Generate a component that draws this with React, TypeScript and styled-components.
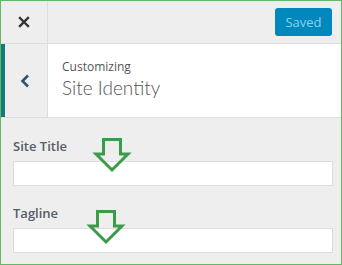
import React from "react";
import styled, { createGlobalStyle } from "styled-components";

const Global = createGlobalStyle`
  html, body { margin: 0; padding: 0; background: #fff; }
  * { box-sizing: border-box; }
`;

const Frame = styled.div`
  position: relative;
  width: 342px;
  height: 265px;
  border: 1px solid #62b866;
  background: #eee;
  font-family: "Open Sans", "Noto Sans", sans-serif;
  color: #555;
  overflow: hidden;
`;

const TopBar = styled.div`
  display: flex;
  align-items: center;
  height: 43px;
  border-bottom: 1px solid #ddd;
  background: #eee;
`;

const CloseBtn = styled.div`
  width: 47px;
  height: 100%;
  display: flex;
  align-items: center;
  justify-content: center;
  border-right: 1px solid #ddd;
`;

const Spacer = styled.div`
  flex: 1;
`;

const SavedBtn = styled.div`
  width: 57px;
  height: 28px;
  margin-right: 9px;
  margin-top: -1px;
  border-radius: 3px;
  background: #0088bd;
  color: #8fd0ec;
  font-size: 13px;
  display: flex;
  align-items: center;
  justify-content: center;
`;

const SectionHeader = styled.div`
  display: flex;
  height: 74px;
  border-bottom: 1px solid #ddd;
  background: #fff;
`;

const BackBtn = styled.div`
  width: 47px;
  background: #eee;
  border-left: 4px solid #137a80;
  border-right: 1px solid #ddd;
  display: flex;
  align-items: center;
  justify-content: center;
  padding-right: 2px;
`;

const Titles = styled.div`
  padding-left: 14px;
  padding-top: 15px;
  display: flex;
  flex-direction: column;
`;

const Small = styled.div`
  font-size: 12px;
  line-height: 16px;
  color: #555;
`;

const Big = styled.div`
  font-family: Lato, "Open Sans", sans-serif;
  font-size: 19px;
  line-height: 22px;
  font-weight: 300;
  color: #555;
  margin-top: 2px;
`;

const Controls = styled.div`
  padding: 19px 8px 0 12px;
  display: flex;
  flex-direction: column;
`;

const Label = styled.div`
  font-size: 13px;
  line-height: 18px;
  font-weight: 600;
  color: #555d66;
  margin-bottom: 6px;
`;

const Input = styled.div<{ $gap?: number }>`
  height: 25px;
  background: #fff;
  border: 1px solid #ddd;
  margin-bottom: ${(p) => p.$gap ?? 0}px;
`;

const ArrowWrap = styled.svg<{ $x: number; $y: number }>`
  position: absolute;
  left: ${(p) => p.$x}px;
  top: ${(p) => p.$y}px;
  overflow: visible;
`;

const Arrow = ({ x, y }: { x: number; y: number }) => (
  <ArrowWrap $x={x} $y={y} width="36" height="34" viewBox="0 0 36 34">
    <polygon
      points="9.5,1.5 26.5,1.5 26.5,16 34,16 18,32 2,16 9.5,16"
      fill="none"
      stroke="#3c9b4a"
      strokeWidth="3"
      strokeLinejoin="miter"
    />
  </ArrowWrap>
);

export default function App() {
  return (
    <>
      <Global />
      <Frame>
        <TopBar>
          <CloseBtn>
            <svg width="12" height="12" viewBox="0 0 12 12">
              <path d="M2 2 L10 10 M10 2 L2 10" stroke="#333" strokeWidth="2.4" strokeLinecap="square" />
            </svg>
          </CloseBtn>
          <Spacer />
          <SavedBtn>Saved</SavedBtn>
        </TopBar>
        <SectionHeader>
          <BackBtn>
            <svg width="10" height="14" viewBox="0 0 10 14">
              <path d="M8 1.5 L2.5 7 L8 12.5" fill="none" stroke="#2f5671" strokeWidth="2.6" />
            </svg>
          </BackBtn>
          <Titles>
            <Small>Customizing</Small>
            <Big>Site Identity</Big>
          </Titles>
        </SectionHeader>
        <Controls>
          <Label>Site Title</Label>
          <Input $gap={18} />
          <Label>Tagline</Label>
          <Input />
        </Controls>
        <Arrow x={93} y={137} />
        <Arrow x={87} y={209} />
      </Frame>
    </>
  );
}
